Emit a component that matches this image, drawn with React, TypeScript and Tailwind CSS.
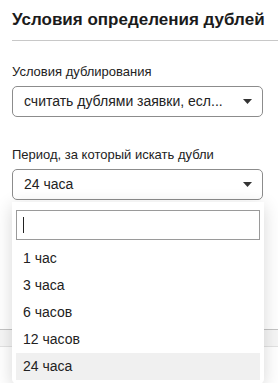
import React from "react";

const options = ["1 час", "3 часа", "6 часов", "12 часов", "24 часа"];

const Caret = () => (
	<svg width="9" height="5" viewBox="0 0 9 5" className="shrink-0">
		<path d="M0 0h9L4.5 5z" fill="#333" />
	</svg>
);

const App = () => {
	const selected = "24 часа";

	return (
		<div
			className="relative w-[278px] h-[383px] overflow-hidden bg-white text-[#222]"
			style={{ fontFamily: '"Liberation Sans", Arial, sans-serif' }}
		>
			<div className="pl-3">
				<h2 className="pt-[9px] h-[40px] text-[17px] font-bold leading-[22px] text-[#1b1b1b] whitespace-nowrap">
					Условия определения дублей
				</h2>
				<hr className="border-t border-[#c8c8c8]" />
			</div>

			<div className="px-3 pt-[23px]">
				<p className="text-[13px] leading-[16px]">Условия дублирования</p>
				<div className="mt-[6px] flex items-center justify-between h-[31px] w-[251px] rounded-[5px] border border-[#8c8c8c] pl-[11px] pr-[10px]">
					<span className="text-[14px] text-[#222] whitespace-nowrap">
						считать дублями заявки, есл...
					</span>
					<Caret />
				</div>

				<p className="mt-[30px] text-[13px] leading-[16px]">
					Период, за который искать дубли
				</p>
				<div className="mt-[6px] flex items-center justify-between h-[31px] w-[251px] rounded-[5px] border border-[#8c8c8c] pl-[11px] pr-[10px]">
					<span className="text-[14px] text-[#222]">{selected}</span>
					<Caret />
				</div>
			</div>

			{/* footer behind the open list */}
			<div className="mt-[129px] h-[18px] border-t border-b border-t-[#c4c4c4] border-b-[#e2e2e2] bg-[#f6f6f6]" />

			<div className="absolute left-[12px] top-[202px] w-[252px] rounded-b-[5px] bg-white px-[4px] pt-[8px] pb-[4px] shadow-[0_4px_18px_rgba(0,0,0,0.16)]">
				<div className="flex items-center h-[30px] border border-[#9a9a9a] pl-[6px]">
					<span className="block w-px h-[16px] bg-[#222]" />
				</div>
				<ul className="mt-[5px]">
					{options.map((o) => (
						<li
							key={o}
							className={`flex items-center h-[27px] pl-[7px] text-[14px] ${
								o === selected ? "bg-[#f0f0f0]" : ""
							}`}
						>
							{o}
						</li>
					))}
				</ul>
			</div>
		</div>
	);
};

export default App;
